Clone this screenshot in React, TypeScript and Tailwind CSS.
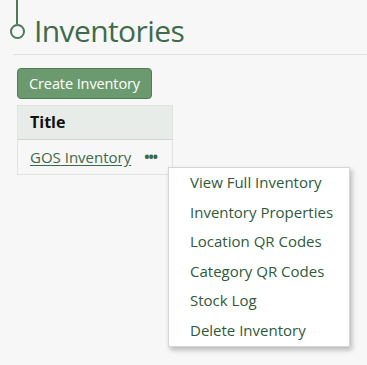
const menuItems = [
  'View Full Inventory',
  'Inventory Properties',
  'Location QR Codes',
  'Category QR Codes',
  'Stock Log',
  'Delete Inventory',
];

export default function App() {
  return (
    <div className="h-[365px] w-[367px] overflow-hidden bg-[#f7f7f7] font-['Open_Sans',sans-serif] text-[#222]">
      <header className="flex items-start pl-[9px]">
        <div className="flex w-[16px] flex-col items-center">
          <span className="h-[24px] w-[2px] bg-[#4d7a58]" />
          <span className="h-[15px] w-[15px] rounded-full border-2 border-[#4d7a58]" />
        </div>
        <h1 className="ml-[9px] mt-[13px] text-[30px] leading-[36px] tracking-[-0.6px] text-[#3f6b4c]">Inventories</h1>
      </header>
      <div className="ml-[13px] mt-[5px] h-px bg-[#e0e0e0]" />

      <main className="px-[17px] pt-[13px]">
        <button className="h-[31px] rounded-[4px] border border-[#4f7d56] bg-[#6b9a6f] px-[11px] text-[14.5px] tracking-[-0.1px] text-white">
          Create Inventory
        </button>

        <div className="relative mt-[6px] w-[156px] border border-[#e3e3e3]">
          <div className="border-b border-[#cfd4d0] bg-[#e7ece8] px-[12px] py-[6px] text-[16px] font-bold leading-[21px] text-[#111]">
            Title
          </div>
          <div className="flex items-center px-[12px] py-[6px] text-[15px] leading-[22px]">
            <a href="#" className="text-[#3b6a48] underline underline-offset-2">GOS Inventory</a>
            <span className="ml-[13px] text-[14px] font-bold leading-none tracking-[-1px] text-[#3b6a48]">•••</span>
          </div>

          <ul className="absolute left-[150px] top-[61px] w-[182px] border border-[#d6d6d6] bg-white shadow-[2px_3px_5px_rgba(0,0,0,0.25)]">
            {menuItems.map((item) => (
              <li key={item} className="whitespace-nowrap px-[21px] py-[4px] text-[15px] leading-[21.6px] text-[#2f5a3a]">
                {item}
              </li>
            ))}
          </ul>
        </div>
      </main>
    </div>
  );
}
